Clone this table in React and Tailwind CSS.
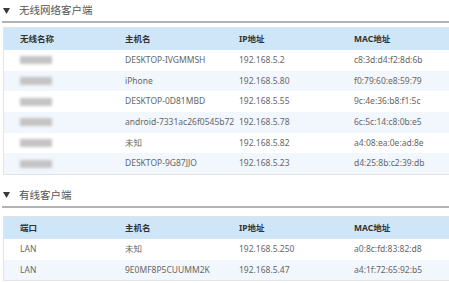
import React from "react";

const wifi = [
  ["DESKTOP-IVGMMSH", "192.168.5.2", "c8:3d:d4:f2:8d:6b"],
  ["iPhone", "192.168.5.80", "f0:79:60:e8:59:79"],
  ["DESKTOP-0D81MBD", "192.168.5.55", "9c:4e:36:b8:f1:5c"],
  ["android-7331ac26f0545b72", "192.168.5.78", "6c:5c:14:c8:0b:e5"],
  ["未知", "192.168.5.82", "a4:08:ea:0e:ad:8e"],
  ["DESKTOP-9G87JJO", "192.168.5.23", "d4:25:8b:c2:39:db"],
];

const wired = [
  ["LAN", "未知", "192.168.5.250", "a0:8c:fd:83:82:d8"],
  ["LAN", "9E0MF8P5CUUMM2K", "192.168.5.47", "a4:1f:72:65:92:b5"],
];

function Title({ text }) {
  return (
    <div>
      <div className="h-[21px] flex items-center">
        <svg width="7" height="6" viewBox="0 0 7 6" className="ml-[3px] mr-[9px]">
          <polygon points="0,0 7,0 3.5,6" fill="#3a3a3a" />
        </svg>
        <span className="text-[10.5px] text-[#555]">{text}</span>
      </div>
      <div className="h-[2px] bg-[#b3b3b3] ml-[2px]" />
    </div>
  );
}

function Blur() {
  return <div className="w-[32px] h-[8px] bg-[#c4c4c4] blur-[1.5px]" />;
}

function Row({ cells, i }) {
  return (
    <div className={`flex items-center h-[20.67px] ${i % 2 === 1 ? "bg-[#f2f7fd]" : "bg-white"}`}>
      <div className="w-[105px] pl-[16px] shrink-0 flex items-center">{cells[0]}</div>
      <div className="w-[114px] pl-[16px] shrink-0 whitespace-nowrap">{cells[1]}</div>
      <div className="w-[115px] pl-[16px] shrink-0 whitespace-nowrap">{cells[2]}</div>
      <div className="pl-[16px] whitespace-nowrap">{cells[3]}</div>
    </div>
  );
}

function Table({ head, rows }) {
  return (
    <div className="ml-[3px] w-[470px] border border-[#e3e3e3] text-[8.5px] text-[#666]">
      <div className="flex items-center h-[22px] bg-[#cfe5f8] font-bold text-[#333]">
        <div className="w-[105px] pl-[16px] shrink-0">{head[0]}</div>
        <div className="w-[114px] pl-[16px] shrink-0">{head[1]}</div>
        <div className="w-[115px] pl-[16px] shrink-0">{head[2]}</div>
        <div className="pl-[16px]">{head[3]}</div>
      </div>
      {rows.map((r, i) => (
        <Row key={i} cells={r} i={i} />
      ))}
    </div>
  );
}

export default function App() {
  return (
    <div
      className="w-[449px] h-[283px] overflow-hidden bg-white"
      style={{ fontFamily: '"Noto Sans", "Noto Sans CJK SC", sans-serif' }}
    >
      <Title text="无线网络客户端" />
      <div className="h-[4px]" />
      <Table
        head={["无线名称", "主机名", "IP地址", "MAC地址"]}
        rows={wifi.map((r) => [<Blur />, ...r])}
      />
      <div className="h-[10px]" />
      <Title text="有线客户端" />
      <div className="h-[8px]" />
      <Table head={["端口", "主机名", "IP地址", "MAC地址"]} rows={wired} />
    </div>
  );
}
